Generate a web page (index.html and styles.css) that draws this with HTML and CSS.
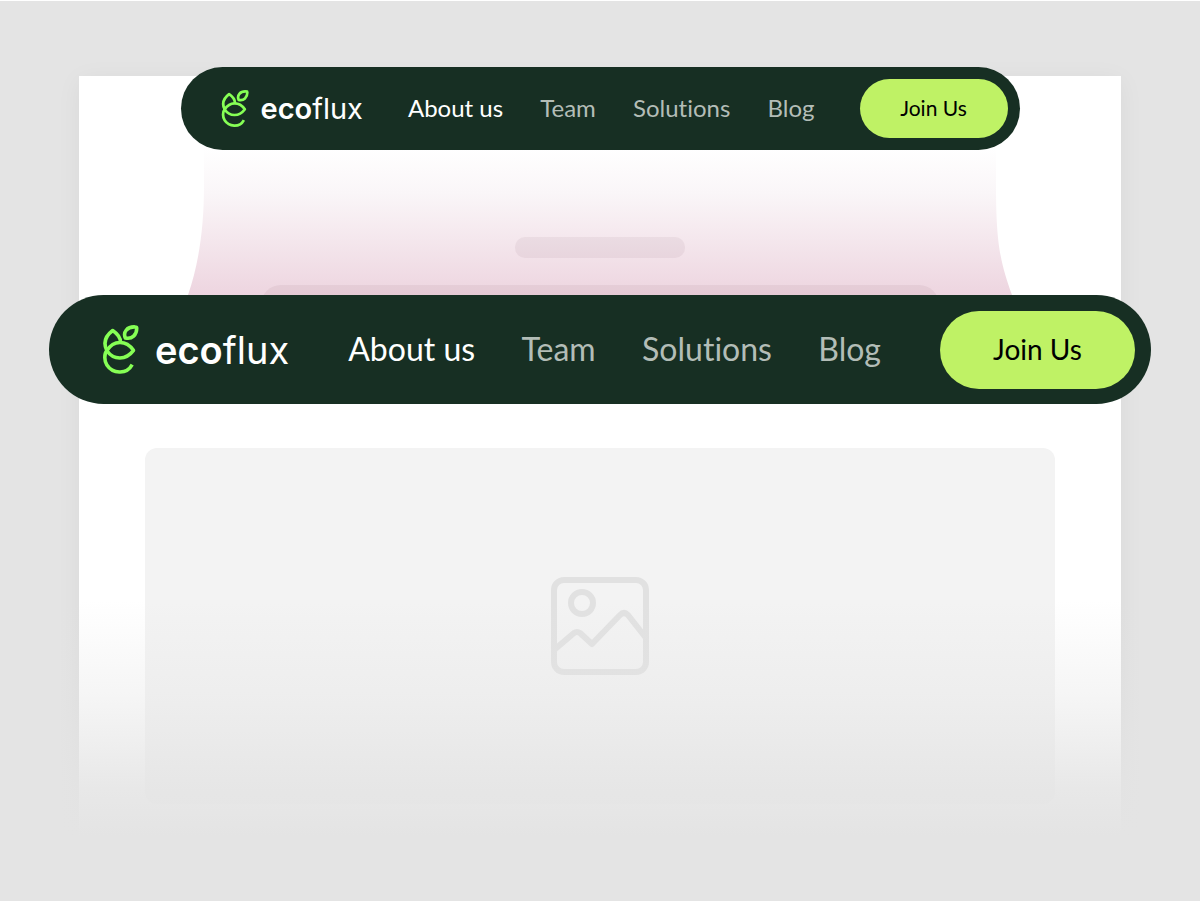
FILE: index.html
```html
<!DOCTYPE html>
<html lang="en">
<head>
  <meta charset="UTF-8">
  <meta name="viewport" content="width=device-width, initial-scale=1.0">
  <title>ecoflux</title>
  <link rel="stylesheet" href="styles.css">
</head>
<body>

  <svg class="sprite" aria-hidden="true">
    <symbol id="logo" viewBox="186 118 112 154">
      <g fill="none" stroke="#86FF55" stroke-width="11" stroke-linejoin="round">
        <path d="M200 197C190 177 190 156 218 135C234 146 242 156 242 171" />
        <path d="M200 197C221 164 259 164 282 196C259 227 221 227 200 197Z" />
        <path d="M200 197C191 206 192 229 200 241C217 267 260 273 278 240" />
        <path d="M257 158C249 140 262 122 288 124Q292 124 292 128C292 148 278 163 257 158Z" />
      </g>
    </symbol>
  </svg>

  <div class="stage">
    <main class="page">
      <div class="hero">
        <svg class="hero-shape" viewBox="0 0 1042 260" preserveAspectRatio="none" aria-hidden="true">
          <defs>
            <linearGradient id="blush" gradientUnits="userSpaceOnUse" x1="0" y1="72" x2="0" y2="222">
              <stop offset="0" stop-color="#FFFFFF" />
              <stop offset="0.3" stop-color="#FAF6F8" />
              <stop offset="1" stop-color="#EDD4DF" />
            </linearGradient>
          </defs>
          <path fill="url(#blush)" d="M125 70V110C125 155 119 190 109 219L100 245H942L933 219C922 188 917 170 917 110V70Z" />
        </svg>
        <div class="hero-lines">
          <div class="line short"></div>
          <div class="line long"></div>
        </div>
      </div>

      <div class="image-box">
        <svg class="image-icon" viewBox="0 0 98 98" fill="none" stroke="#E1E1E1" stroke-width="6" aria-hidden="true">
          <rect x="3" y="3" width="92" height="92" rx="10" />
          <circle cx="31" cy="26" r="11" />
          <path stroke-linejoin="round" d="M3 73L23 56Q26 54 29 56L41 67L69 38Q73 34 77 38L95 61" />
        </svg>
      </div>
    </main>

    <div class="fade"></div>

    <div class="navs">
      <nav class="navbar small" aria-label="Compact">
        <a class="brand" href="#">
          <svg class="logo" aria-hidden="true"><use href="#logo" /></svg>
          <span class="brand-name"><b>eco</b>flux</span>
        </a>
        <div class="links">
          <a class="active" href="#about">About us</a>
          <a href="#team">Team</a>
          <a href="#solutions">Solutions</a>
          <a href="#blog">Blog</a>
        </div>
        <button class="join" type="button">Join Us</button>
      </nav>

      <nav class="navbar large" aria-label="Main">
        <a class="brand" href="#">
          <svg class="logo" aria-hidden="true"><use href="#logo" /></svg>
          <span class="brand-name"><b>eco</b>flux</span>
        </a>
        <div class="links">
          <a class="active" href="#about">About us</a>
          <a href="#team">Team</a>
          <a href="#solutions">Solutions</a>
          <a href="#blog">Blog</a>
        </div>
        <button class="join" type="button">Join Us</button>
      </nav>
    </div>
  </div>

</body>
</html>
```

FILE: styles.css
```css
* {
  box-sizing: border-box;
}

body {
  font-family: Lato, 'Liberation Sans', sans-serif;
  font-variant-ligatures: none;
  background-color: #E4E4E4;
  margin: 0;
}

.sprite {
  display: none;
}

/* page, fade and navbars share one grid cell */
.stage {
  display: grid;
  grid-template-columns: minmax(0, 1fr);
  min-height: 100vh;
  border-top: 1px solid #FFFFFF;
}

.page, .fade, .navs {
  grid-area: 1 / 1;
}

.page {
  align-self: start;
  margin: 75px 79px 0;
  padding-bottom: 32px;
  background-color: #FFFFFF;
  box-shadow: 0 4px 24px rgba(0, 0, 0, 0.05);
}

.fade {
  align-self: start;
  height: 235px;
  margin-top: 600px;
  background: linear-gradient(rgba(228, 228, 228, 0), rgba(228, 228, 228, 0.35) 40%, rgba(228, 228, 228, 0.85) 80%, #E4E4E4);
  box-shadow: 0 65px 0 #E4E4E4;
}

/* hero */
.hero {
  display: grid;
}

.hero-shape, .hero-lines {
  grid-area: 1 / 1;
}

.hero-shape {
  width: 100%;
  height: 260px;
}

.hero-lines {
  display: flex;
  flex-direction: column;
  align-items: center;
  gap: 27px;
  padding-top: 161px;
}

.line {
  background-color: rgba(80, 40, 50, 0.06);
}

.short {
  width: 170px;
  height: 21px;
  border-radius: 10px;
}

.long {
  width: 65%;
  height: 40px;
  border-radius: 20px;
}

/* image placeholder */
.image-box {
  display: flex;
  align-items: center;
  justify-content: center;
  height: 356px;
  margin: 112px 66px 0;
  border-radius: 12px;
  background-color: #F3F3F3;
}

.image-icon {
  width: 98px;
  height: 98px;
}

/* navbars */
.navs {
  display: flex;
  flex-direction: column;
  align-items: center;
  gap: 145px;
  padding: 66px 49px 0;
}

.navbar {
  display: flex;
  align-items: center;
  background-color: #172F23;
  border-radius: 60px;
}

.brand {
  display: flex;
  align-items: center;
  color: #FFFFFF;
  text-decoration: none;
}

.brand-name {
  font-family: Inter, sans-serif;
}

.brand-name b {
  font-weight: 600;
}

.links {
  flex: 1;
  display: flex;
  justify-content: space-between;
  padding-bottom: 2px;
}

.links a {
  color: #B3BDB7;
  text-decoration: none;
}

.links .active {
  color: #FFFFFF;
}

.join {
  padding: 0 0 2px;
  border: none;
  border-radius: 40px;
  background-color: #BFF265;
  color: #000000;
  font-family: inherit;
  cursor: pointer;
}

.small {
  width: 839px;
  max-width: 100%;
  height: 83px;
  padding: 0 12px 0 40px;
}

.small .logo {
  width: 28px;
  height: 38px;
}

.small .brand {
  gap: 12px;
}

.small .brand-name {
  font-size: 29px;
}

.small .links {
  margin: 0 45px;
  font-size: 24px;
}

.small .join {
  width: 148px;
  height: 59px;
  font-size: 21px;
}

.large {
  width: 100%;
  height: 109px;
  padding: 0 16px 0 53px;
}

.large .logo {
  width: 37px;
  height: 50px;
}

.large .brand {
  gap: 16px;
}

.large .brand-name {
  font-size: 38px;
}

.large .links {
  margin: 0 59px;
  font-size: 32px;
}

.large .join {
  width: 195px;
  height: 78px;
  font-size: 28px;
}
```
